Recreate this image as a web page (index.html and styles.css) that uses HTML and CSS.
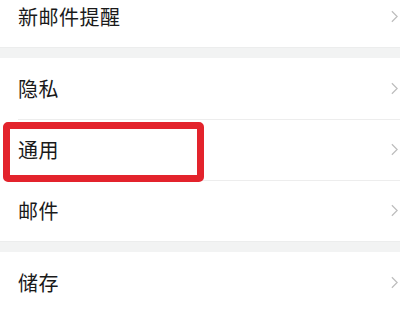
FILE: index.html
```html
<!DOCTYPE html>
<html lang="zh">
<head>
<meta charset="utf-8">
<link rel="stylesheet" href="styles.css">
</head>
<body>
<div class="page">
  <div class="group first">
    <div class="row"><span class="label">新邮件提醒</span><svg class="chev" viewBox="0 0 8 14"><path d="M1 1 L7 7 L1 13"/></svg></div>
  </div>
  <div class="gap"></div>
  <div class="group">
    <div class="row"><span class="label">隐私</span><svg class="chev" viewBox="0 0 8 14"><path d="M1 1 L7 7 L1 13"/></svg></div>
    <div class="row highlighted"><span class="label">通用</span><svg class="chev" viewBox="0 0 8 14"><path d="M1 1 L7 7 L1 13"/></svg><div class="mark"></div></div>
    <div class="row"><span class="label">邮件</span><svg class="chev" viewBox="0 0 8 14"><path d="M1 1 L7 7 L1 13"/></svg></div>
  </div>
  <div class="gap"></div>
  <div class="group">
    <div class="row"><span class="label">储存</span><svg class="chev" viewBox="0 0 8 14"><path d="M1 1 L7 7 L1 13"/></svg></div>
  </div>
</div>
</body>
</html>
```

FILE: styles.css
```css
html, body {
  margin: 0;
  padding: 0;
  background: #ffffff;
  overflow: hidden;
}
.page {
  width: 400px;
  height: 311px;
  overflow: hidden;
  font-family: "Noto Sans CJK SC", "Noto Sans", sans-serif;
}
.group {
  background: #ffffff;
}
.first {
  margin-top: -14px;
}
.gap {
  height: 11px;
  background: #f2f3f3;
  border-top: 1px solid #eceded;
  box-sizing: border-box;
}
.row {
  position: relative;
  height: 61px;
  display: flex;
  align-items: center;
  justify-content: space-between;
  padding-left: 18px;
  padding-right: 2px;
  box-sizing: border-box;
}
.row + .row::before {
  content: "";
  position: absolute;
  top: 0;
  left: 18px;
  right: 0;
  height: 1px;
  background: #ededed;
}
.label {
  font-size: 20px;
  color: #1a1a1a;
  line-height: 1;
  letter-spacing: 0.5px;
}
.chev {
  width: 7px;
  height: 13px;
  fill: none;
  stroke: #bdbdbd;
  stroke-width: 1.4;
}
.mark {
  position: absolute;
  z-index: 2;
  left: 3px;
  top: 3px;
  width: 201px;
  height: 60px;
  border: 7px solid #e3232c;
  border-radius: 5px;
  box-sizing: border-box;
}
```
